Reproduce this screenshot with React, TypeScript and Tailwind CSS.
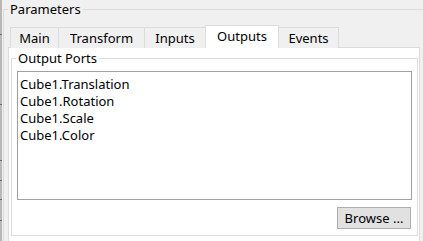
const tabs = [
  { label: "Main", w: "w-[48px]", cls: "border-l" },
  { label: "Transform", w: "w-[86px]", cls: "border-l" },
  { label: "Inputs", w: "w-[61px]", cls: "border-l" },
  { label: "Outputs", w: "w-[74px]", cls: "border-l border-r", active: true },
  { label: "Events", w: "w-[60px]", cls: "border-r" },
]

const ports = ["Cube1.Translation", "Cube1.Rotation", "Cube1.Scale", "Cube1.Color"]

const ticks = ["top-[34px]", "top-[104px]", "top-[160px]", "top-[180px]", "top-[199px]", "top-[220px]"]

export default function App() {
  return (
    <div className="w-[423px] h-[241px] overflow-hidden bg-[#f0f0f0] flex font-['Noto_Sans',sans-serif] text-[13px] text-black">

      {/* edge of the neighbouring splitter */}
      <div className="relative w-[2px] shrink-0 bg-[#b8b8b8]">
        {ticks.map((t) => (
          <div key={t} className={`absolute left-0 w-full h-px bg-[#6a6a6a] ${t}`}></div>
        ))}
      </div>

      <fieldset className="ml-[1px] shrink-0 w-[440px] h-[270px] border border-[#dcdcdc]">
        <legend className="ml-[4px] px-[2px] leading-[18px]">Parameters</legend>

        <div className="pt-[7px] pl-[4px]">

          <div className="relative z-10 flex items-end h-[23px] ml-[2px] -mb-px">
            {tabs.map((t) =>
              t.active ? (
                <div
                  key={t.label}
                  className={`${t.w} ${t.cls} h-[23px] border-t border-[#dcdcdc] bg-white flex justify-center leading-[20px]`}
                >
                  {t.label}
                </div>
              ) : (
                <div
                  key={t.label}
                  className={`${t.w} ${t.cls} h-[21px] border-t border-[#dcdcdc] bg-[#f0f0f0] flex justify-center leading-[20px]`}
                >
                  {t.label}
                </div>
              )
            )}
          </div>

          <div className="w-[412px] h-[210px] border border-[#dcdcdc] bg-white">
            <fieldset className="ml-[2px] mt-[1px] w-[407px] h-[187px] border border-[#dcdcdc]">
              <legend className="ml-[4px] px-[2px] leading-[18px]">Output Ports</legend>

              <div className="flex flex-col">
                <div className="mt-[4px] ml-[5px] w-[395px] h-[129px] border border-[#a0a0a0] bg-white pt-[4px] pl-[2px]">
                  {ports.map((p) => (
                    <div key={p} className="leading-[17px]">{p}</div>
                  ))}
                </div>

                <button className="self-end mt-[7px] mr-[6px] w-[74px] h-[22px] border border-[#adadad] bg-[#e1e1e1] leading-[20px] text-center">
                  Browse ...
                </button>
              </div>
            </fieldset>
          </div>

        </div>
      </fieldset>
    </div>
  )
}
